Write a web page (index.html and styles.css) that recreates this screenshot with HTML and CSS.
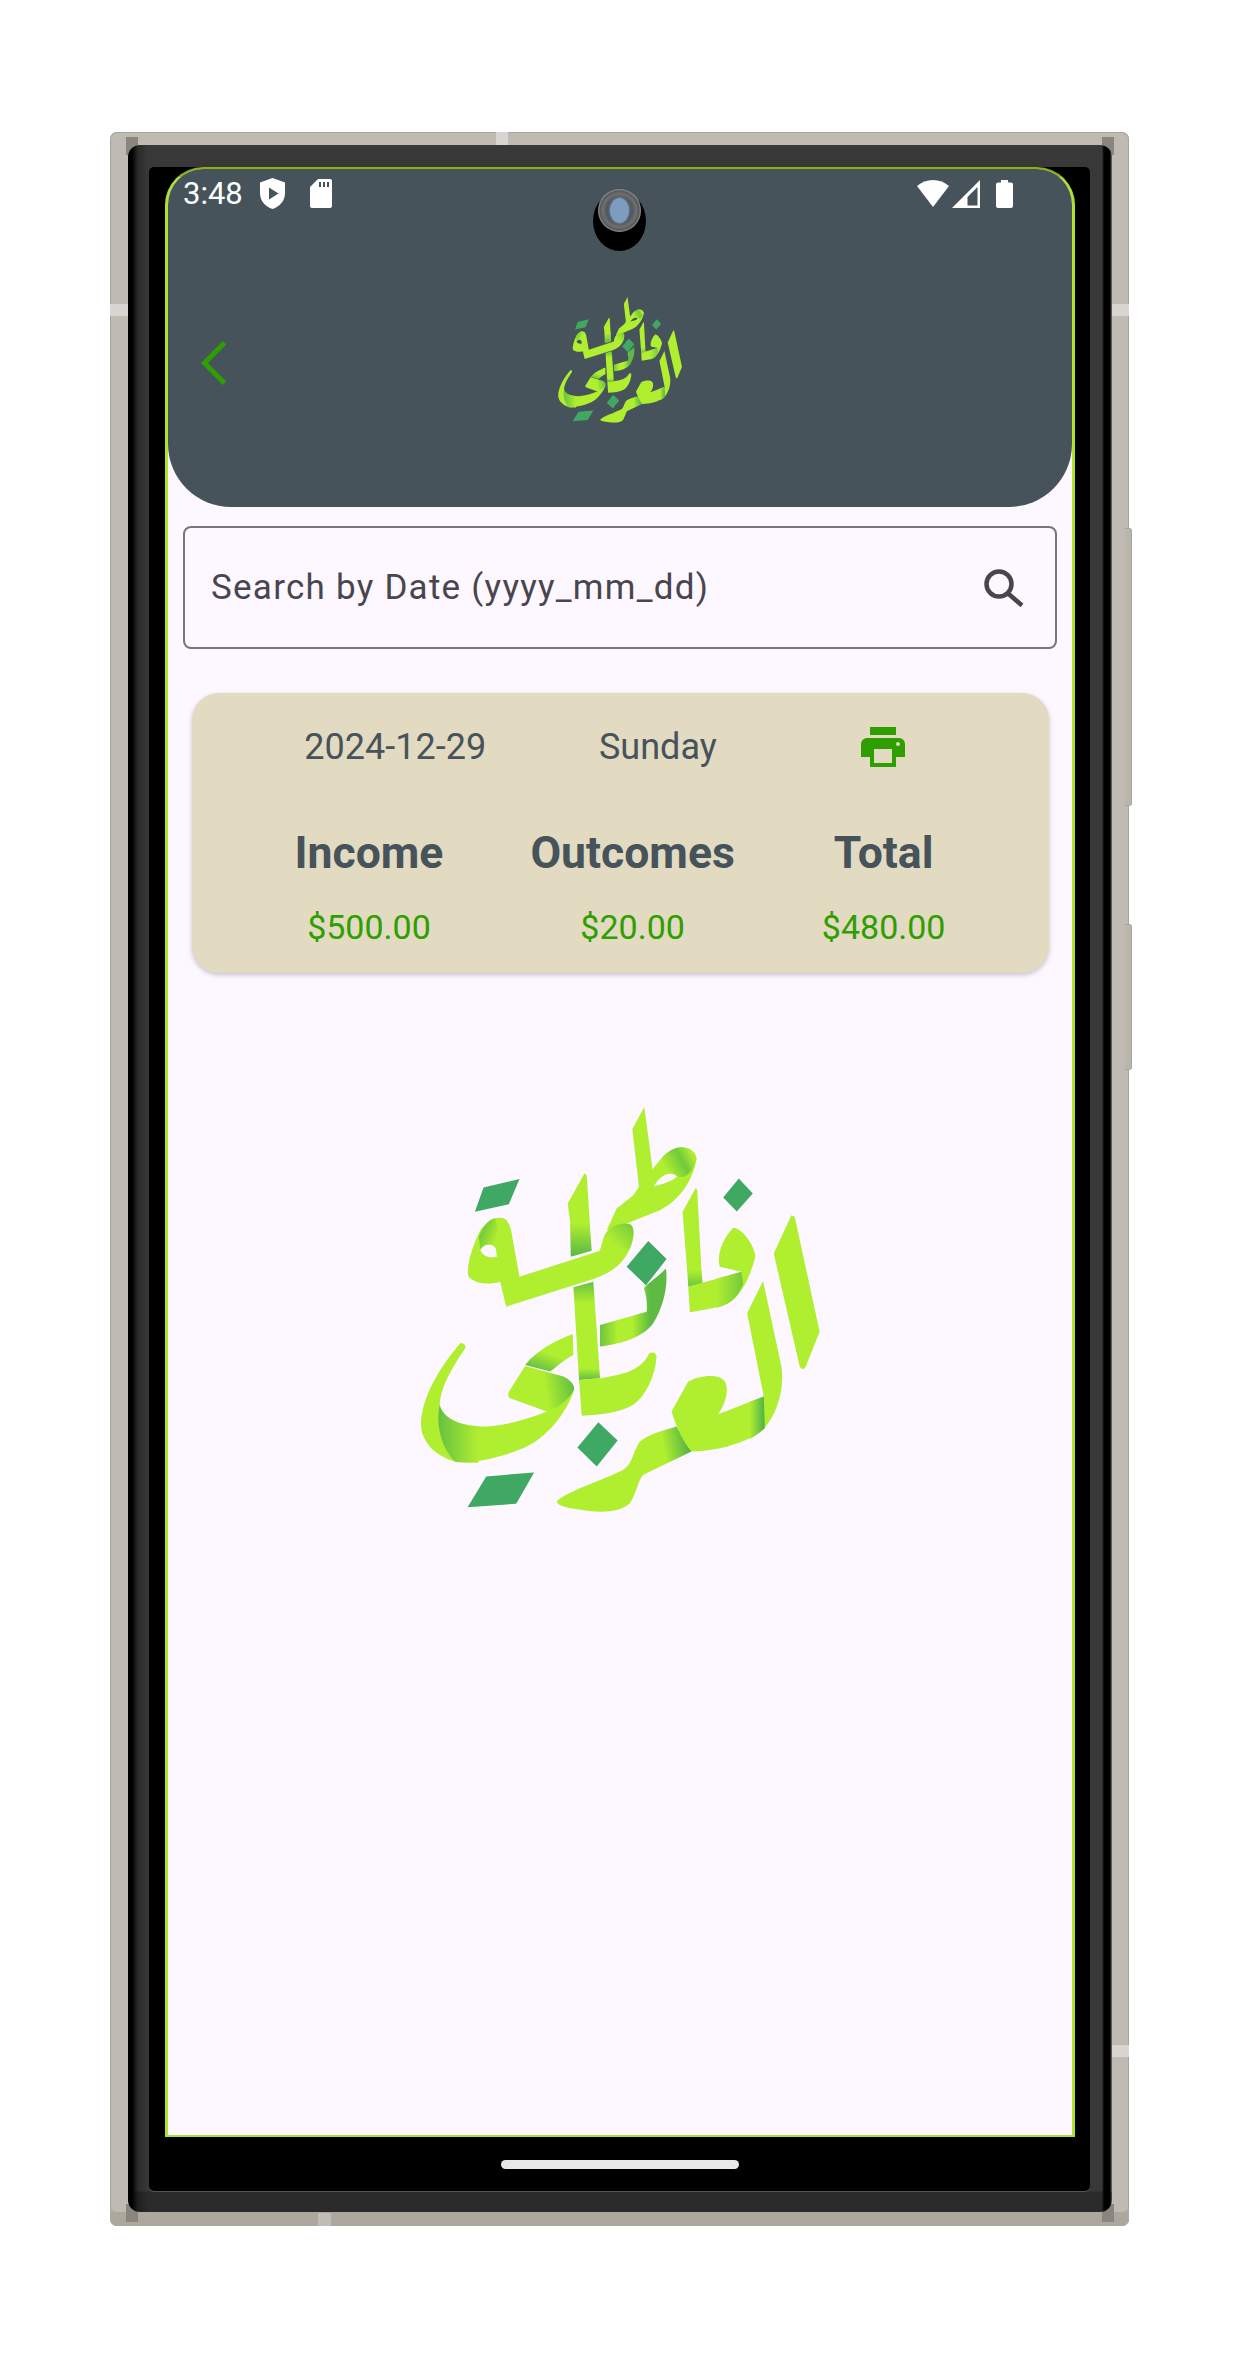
FILE: index.html
```html
<!DOCTYPE html>
<html lang="en">
<head>
  <meta charset="UTF-8">
  <title>Daily Report</title>
  <link rel="stylesheet" href="styles.css">
</head>
<body>

  <div class="device">
    <span class="band band-top"></span>
    <span class="band band-bottom"></span>
    <span class="band band-left"></span>
    <span class="band band-right"></span>
    <span class="band band-right-low"></span>
    <span class="notch notch-tl"></span>
    <span class="notch notch-tr"></span>
    <span class="notch notch-bl"></span>
    <span class="notch notch-br"></span>
    <span class="side-btn btn-power"></span>
    <span class="side-btn btn-volume"></span>

    <div class="bezel">
      <div class="glass">
        <div class="screen">

          <!-- Header -->
          <header class="app-header">
            <div class="status-bar">
              <span class="time">3:48</span>
              <svg class="ic-shield" viewBox="0 0 25 31"><path fill="#fff" fill-rule="evenodd" d="M12.5 0 25 4.5V15c0 8-5.2 13.5-12.5 16C5.200 28.500 0 23 0 15V4.500ZM9 9.500v12l9.500-6Z"/></svg>
              <svg class="ic-sd" viewBox="0 0 22 29"><path fill="#fff" fill-rule="evenodd" d="M8 0h12a2 2 0 0 1 2 2v25a2 2 0 0 1-2 2H2a2 2 0 0 1-2-2V8ZM9 3v5h2V3Zm4 0v5h2V3Zm4 0v5h2V3Z"/></svg>
              <span class="status-right">
                <svg class="ic-wifi" viewBox="0 0 32 27"><path fill="#fff" d="M16 0c6 0 11.500 2.200 16 6L16 27 0 6C4.500 2.200 10 0 16 0Z"/></svg>
                <svg class="ic-signal" viewBox="0 0 28 28"><path fill="#fff" fill-rule="evenodd" d="M28 0v28H0ZM25.500 7 15.500 17v8.500h10Z"/></svg>
                <svg class="ic-battery" viewBox="0 0 17 28"><path fill="#fff" d="M5 0h7v2.500h3a2 2 0 0 1 2 2V26a2 2 0 0 1-2 2H2a2 2 0 0 1-2-2V4.500a2 2 0 0 1 2-2h3Z"/></svg>
              </span>
            </div>
            <div class="camera"><span class="lens"></span></div>
            <div class="toolbar">
              <svg class="ic-back" viewBox="0 0 25 44"><path fill="none" stroke="#2f9e00" stroke-width="5" d="M23.500 1.800 3.500 22l20 20.200"/></svg>
              <svg class="logo logo-small" viewBox="60 80 1200 1220">
                <defs>
                  <linearGradient id="gStem" gradientUnits="userSpaceOnUse" x1="540" y1="430" x2="540" y2="525"><stop offset="0" stop-color="#b0ee30"/><stop offset="1" stop-color="#5dbb44"/></linearGradient>
                  <linearGradient id="gStem2" gradientUnits="userSpaceOnUse" x1="550" y1="610" x2="550" y2="900"><stop offset="0" stop-color="#6cc63e"/><stop offset=".2" stop-color="#b0ee30"/><stop offset=".88" stop-color="#b0ee30"/><stop offset="1" stop-color="#62bf42"/></linearGradient>
                  <linearGradient id="gNun" gradientUnits="userSpaceOnUse" x1="600" y1="740" x2="750" y2="740"><stop offset="0" stop-color="#6cc63e"/><stop offset=".35" stop-color="#b0ee30"/><stop offset=".65" stop-color="#b0ee30"/><stop offset="1" stop-color="#5dbb44"/></linearGradient>
                  <linearGradient id="gBa" gradientUnits="userSpaceOnUse" x1="430" y1="815" x2="410" y2="870"><stop offset="0" stop-color="#b0ee30"/><stop offset="1" stop-color="#62bf42"/></linearGradient>
                  <linearGradient id="gHead" gradientUnits="userSpaceOnUse" x1="440" y1="950" x2="525" y2="935"><stop offset="0" stop-color="#b0ee30"/><stop offset="1" stop-color="#62bf42"/></linearGradient>
                  <linearGradient id="gSweep" gradientUnits="userSpaceOnUse" x1="108" y1="1060" x2="235" y2="1060"><stop offset="0" stop-color="#62bf42"/><stop offset="1" stop-color="#b0ee30"/></linearGradient>
                  <linearGradient id="gFa" gradientUnits="userSpaceOnUse" x1="950" y1="630" x2="1032" y2="630"><stop offset="0" stop-color="#b0ee30"/><stop offset="1" stop-color="#72c93c"/></linearGradient>
                  <linearGradient id="gFaStem" gradientUnits="userSpaceOnUse" x1="880" y1="570" x2="880" y2="620"><stop offset="0" stop-color="#b0ee30"/><stop offset="1" stop-color="#6cc63e"/></linearGradient>
                  <linearGradient id="gLam" gradientUnits="userSpaceOnUse" x1="1050" y1="1010" x2="1095" y2="1010"><stop offset="0" stop-color="#b0ee30"/><stop offset="1" stop-color="#4fb048"/></linearGradient>
                  <linearGradient id="gTail" gradientUnits="userSpaceOnUse" x1="790" y1="1100" x2="870" y2="1085"><stop offset="0" stop-color="#b0ee30"/><stop offset="1" stop-color="#4fb048"/></linearGradient>
                  <linearGradient id="gBowl" gradientUnits="userSpaceOnUse" x1="800" y1="270" x2="880" y2="225"><stop offset="0" stop-color="#b0ee30"/><stop offset=".6" stop-color="#72c93c"/><stop offset="1" stop-color="#b0ee30"/></linearGradient>
                  <linearGradient id="gEye" gradientUnits="userSpaceOnUse" x1="240" y1="450" x2="290" y2="470"><stop offset="0" stop-color="#6cc63e"/><stop offset="1" stop-color="#b0ee30"/></linearGradient>
                  <linearGradient id="gKnot" gradientUnits="userSpaceOnUse" x1="690" y1="440" x2="640" y2="490"><stop offset="0" stop-color="#7ed03a"/><stop offset="1" stop-color="#b0ee30"/></linearGradient>

                  <g id="calligraphy">
                    <path fill="#b0ee30" fill-rule="evenodd" d="M733 80 697 147 717 320 700 345 650 385 620 450 680 430 780 390C840 360 880 300 890 235 885 205 850 195 825 205 795 220 775 245 758 268ZM762 318C780 285 810 270 832 288 815 305 785 312 762 318Z"/>
                    <path fill="url(#gBowl)" d="M780 240C795 220 810 210 825 205 850 195 885 205 890 235 880 270 860 300 832 288 815 270 795 270 780 280Z"/>
                    <path fill="#b0ee30" d="M553 280 503 370 512 440H570L560 285Z"/>
                    <path fill="url(#gStem)" d="M510 430H569L575 512 512 530Z"/>
                    <path fill="#b0ee30" fill-rule="evenodd" d="M300 413C325 413 332 440 338 480L358 590 600 512 612 470C625 440 660 425 690 432 705 440 705 470 690 505 670 550 640 575 580 597L318 680 300 605C270 615 225 612 205 590 195 560 220 490 240 450 260 425 280 411 300 413ZM240 510C250 488 280 488 287 505L290 530C265 535 250 530 240 510Z"/>
                    <path fill="url(#gEye)" d="M285 414C265 418 250 435 236 470L240 510C250 488 280 488 287 505L297 470Z"/>
                    <path fill="url(#gKnot)" d="M612 470C625 440 660 425 690 432 705 440 702 470 690 505L600 512Z"/>
                    <path fill="url(#gStem2)" d="M520 622 580 605 600 895 537 900Z"/>
                    <path fill="url(#gNun)" d="M798 565C765 600 740 610 732 625 740 650 742 670 740 695L600 735V800C670 790 725 775 760 730 790 680 805 620 798 565Z"/>
                    <path fill="url(#gBa)" d="M518 762 520 825C490 840 470 860 450 875L375 855C410 810 470 780 518 762Z"/>
                    <path fill="#b0ee30" d="M180 790C190 788 198 795 195 805 150 870 118 930 118 980 130 1020 190 1040 260 1040 330 1035 390 1015 440 995L522 930C500 1000 440 1075 370 1105 300 1135 220 1150 170 1147 100 1130 60 1080 62 1030 65 950 120 860 180 790Z"/>
                    <path fill="url(#gSweep)" d="M118 975C130 1020 190 1040 235 1040V1149C210 1150 190 1148 165 1147 125 1105 105 1040 118 975Z"/>
                    <path fill="url(#gHead)" d="M375 858 490 890C510 900 525 915 522 930 505 960 475 985 440 995L330 955C322 950 322 940 330 930Z"/>
                    <path fill="#b0ee30" d="M537 900 600 895C660 885 720 875 745 825 750 815 768 815 770 830 765 890 740 945 700 975 660 1000 600 1005 545 1008Z"/>
                    <path fill="#b0ee30" d="M888 323 848 395 862 575H905L892 330Z"/>
                    <path fill="url(#gFaStem)" d="M862 570H905L908 610 865 620Z"/>
                    <path fill="#b0ee30" d="M1000 443C1030 445 1065 500 1067 530 1050 590 1030 640 985 670 950 685 910 690 870 697L865 620 1025 575 960 560C950 530 965 480 1000 443Z"/>
                    <path fill="url(#gFa)" d="M950 596 1025 575 1030 610C1020 640 1005 658 985 670 970 678 960 682 950 684Z"/>
                    <path fill="#b0ee30" d="M1175 405 1122 520 1200 860C1205 870 1215 870 1218 860L1260 755 1185 410Z"/>
                    <path fill="url(#gTail)" d="M830 1040 875 1115 730 1185C715 1200 710 1240 690 1270 660 1300 600 1300 540 1290 490 1285 470 1275 470 1265 500 1235 600 1205 670 1170 700 1150 700 1110 720 1085 750 1060 800 1050 830 1040Z"/>
                    <path fill="#b0ee30" d="M1090 603 1042 700 1092 950 955 1003C985 960 985 920 975 905 960 880 900 885 865 905L815 995C825 1030 850 1090 875 1115 950 1115 1040 1090 1090 1050 1135 1000 1155 920 1145 860Z"/>
                    <path fill="url(#gLam)" d="M1050 966 1092 950 1095 1045 1090 1050C1070 1066 1060 1072 1050 1078Z"/>
                    <path fill="#3fa963" d="M250 322 358 296 326 372 224 395ZM1017 295 1059 340 1011 394 970 352ZM745 483 800 537 738 616 680 560ZM595 1027 653 1082 590 1160 532 1103ZM258 1190 402 1178 348 1272 202 1283Z"/>
                  </g>
                </defs>
                <use href="#calligraphy"/>
              </svg>
              <span></span>
            </div>
          </header>

          <!-- Search -->
          <div class="search-box">
            <span class="search-label">Search by Date (yyyy_mm_dd)</span>
            <svg class="ic-search" viewBox="0 0 40 38"><path fill="none" stroke="#49454f" stroke-width="4.500" d="M15 2.500a12.500 12.500 0 1 0 0 25 12.500 12.500 0 1 0 0-25ZM23.500 24 38 36.500"/></svg>
          </div>

          <!-- Report card -->
          <div class="report-card">
            <div class="report-top">
              <span>2024-12-29</span>
              <span>Sunday</span>
              <span class="print-btn">
                <svg class="ic-print" viewBox="0 0 44 40"><path fill="#2f9e00" fill-rule="evenodd" d="M9 0h26v8H9ZM6 11h32a6 6 0 0 1 6 6v13H35v10H9V30H0V17a6 6 0 0 1 6-6ZM13 22v14h18V22ZM37 15a2 2 0 1 0 0 4 2 2 0 1 0 0-4Z"/></svg>
              </span>
            </div>
            <div class="report-totals">
              <div class="total-col">
                <h3>Income</h3>
                <p>$500.00</p>
              </div>
              <div class="total-col">
                <h3>Outcomes</h3>
                <p>$20.00</p>
              </div>
              <div class="total-col">
                <h3>Total</h3>
                <p>$480.00</p>
              </div>
            </div>
          </div>

          <svg class="logo logo-big" viewBox="60 80 1200 1220"><use href="#calligraphy"/></svg>

        </div>
        <div class="home-bar"></div>
      </div>
    </div>
  </div>

</body>
</html>
```

FILE: styles.css
```css
body {
  margin: 0;
  background-color: #fff;
  font-family: Roboto, "Liberation Sans", sans-serif;
}

/* Phone mockup */
.device {
  position: relative;
  box-sizing: border-box;
  width: 1019px;
  height: 2094px;
  margin: 132px 0 0 110px;
  padding: 13px 17px 14px 18px;
  background-color: #bfbab2;
  border-radius: 7px;
  box-shadow: inset 0 -14px 0 #aea79d, inset 0 0 0 1px #aaa59c;
}

.band {
  position: absolute;
  background-color: #d8d6d2;
}

.band-top { top: 0; left: 386px; width: 12px; height: 13px; }
.band-bottom { bottom: 0; left: 208px; width: 13px; height: 13px; background-color: #c0bdb8; }
.band-left { top: 172px; left: 0; width: 18px; height: 12px; }
.band-right { top: 172px; right: 0; width: 17px; height: 12px; }
.band-right-low { top: 1913px; right: 0; width: 17px; height: 12px; }

.notch {
  position: absolute;
  width: 12px;
  height: 18px;
  background-color: #8a857d;
}

.notch-tl { top: 5px; left: 16px; }
.notch-tr { top: 5px; right: 15px; }
.notch-bl { bottom: 4px; left: 16px; }
.notch-br { bottom: 4px; right: 15px; }

.side-btn {
  position: absolute;
  right: -3px;
  width: 6px;
  background-color: #bbb6ad;
  border: 1px solid #a9a49b;
  border-left: none;
  border-radius: 0 3px 3px 0;
}

.btn-power { top: 396px; height: 276px; }
.btn-volume { top: 792px; height: 144px; }

.bezel {
  position: relative;
  box-sizing: border-box;
  height: 100%;
  padding: 22px 22px 21px 21px;
  background:
    linear-gradient(rgba(0, 0, 0, 0) calc(100% - 21px), rgba(0, 0, 0, 0.25) calc(100% - 20px)),
    linear-gradient(90deg, #000 4px, #2b2b2b 10px, #383838 20px, #383838 calc(100% - 10px), #000 calc(100% - 8px), #000 calc(100% - 2px), #7a7770 100%);
  border-radius: 12px;
}

.glass {
  box-sizing: border-box;
  display: flex;
  flex-direction: column;
  align-items: center;
  height: 100%;
  padding: 0 15px 0 16px;
  background-color: #000;
  border-radius: 5px;
  box-shadow: 0 1px 0 #555;
}

.screen {
  box-sizing: border-box;
  display: flex;
  flex-direction: column;
  align-items: center;
  flex: none;
  width: 100%;
  height: 1970px;
  background-color: #fdf7ff;
  border: 3px solid #aee22e;
  border-top: 2px solid #8ab30e;
  border-bottom-width: 2px;
  border-radius: 38px 38px 0 0;
  overflow: hidden;
}

.home-bar {
  width: 238px;
  height: 9px;
  margin-top: 23px;
  background-color: #e8e8e8;
  border-radius: 5px;
}

/* Header */
.app-header {
  position: relative;
  flex: none;
  box-sizing: border-box;
  width: 100%;
  height: 338px;
  background-color: #47535b;
  border-radius: 0 0 63px 63px;
}

.status-bar {
  display: flex;
  align-items: center;
  height: 31px;
  padding: 9px 59px 0 15px;
  color: #fff;
  font-size: 31px;
}

.time {
  width: 77px;
}

.ic-shield { width: 25px; height: 31px; }
.ic-sd { width: 22px; height: 29px; margin-left: 25px; }

.status-right {
  display: flex;
  align-items: center;
  margin-left: auto;
}

.ic-wifi { width: 32px; height: 27px; }
.ic-signal { width: 28px; height: 28px; margin-left: 3px; }
.ic-battery { width: 17px; height: 28px; margin-left: 16px; }

.camera {
  position: absolute;
  top: 22px;
  left: 425px;
  width: 53px;
  height: 60px;
  background-color: #000;
  border-radius: 50%;
}

.lens {
  position: absolute;
  top: -2px;
  left: 5px;
  width: 43px;
  height: 43px;
  background: radial-gradient(circle closest-side, #4c5866 50%, #55585c 62%, #6f7072 78%, #56585a 90%, #949494 100%);
  border-radius: 50%;
}

.lens::after {
  content: "";
  position: absolute;
  top: 9px;
  left: 12px;
  width: 19px;
  height: 25px;
  background-color: #7d9cc0;
  border-radius: 50%;
  box-shadow: 0 0 3px #7d9cc0;
}

.toolbar {
  display: grid;
  grid-template-columns: 1fr auto 1fr;
  align-items: center;
  margin-top: 88px;
  padding-left: 33px;
  padding-right: 33px;
}

.ic-back {
  width: 25px;
  height: 44px;
  margin-top: 5px;
}

.logo {
  display: block;
  flex: none;
}

.logo-small {
  width: 124px;
  height: 126px;
}

/* Search */
.search-box {
  box-sizing: border-box;
  display: flex;
  flex: none;
  align-items: center;
  justify-content: space-between;
  width: 874px;
  height: 123px;
  margin-top: 19px;
  padding: 0 31px 0 26px;
  border: 2px solid #79747e;
  border-radius: 8px;
}

.search-label {
  color: #49454f;
  font-size: 35px;
  letter-spacing: 1.25px;
}

.ic-search {
  width: 40px;
  height: 38px;
}

/* Report card */
.report-card {
  box-sizing: border-box;
  flex: none;
  width: 857px;
  height: 280px;
  margin-top: 44px;
  background-color: #e2dac1;
  border-radius: 27px;
  box-shadow: 0 2px 5px rgba(0, 0, 0, 0.22);
}

.report-top {
  display: flex;
  align-items: center;
  justify-content: space-evenly;
  height: 108px;
  color: #47535b;
  font-size: 36px;
}

.print-btn {
  display: flex;
  justify-content: center;
  width: 106px;
}

.ic-print {
  width: 44px;
  height: 40px;
}

.report-totals {
  display: flex;
  justify-content: space-evenly;
  margin-top: 26px;
  padding: 0 16px;
}

.total-col {
  text-align: center;
}

.total-col h3 {
  margin: 0;
  color: #47535b;
  font-size: 44.5px;
  font-weight: 700;
  line-height: 52px;
}

.total-col p {
  margin: 28px 0 0;
  color: #2f9e00;
  font-size: 34px;
  line-height: 40px;
}

.logo-big {
  width: 400px;
  height: 406px;
  margin-top: 134px;
}
```
